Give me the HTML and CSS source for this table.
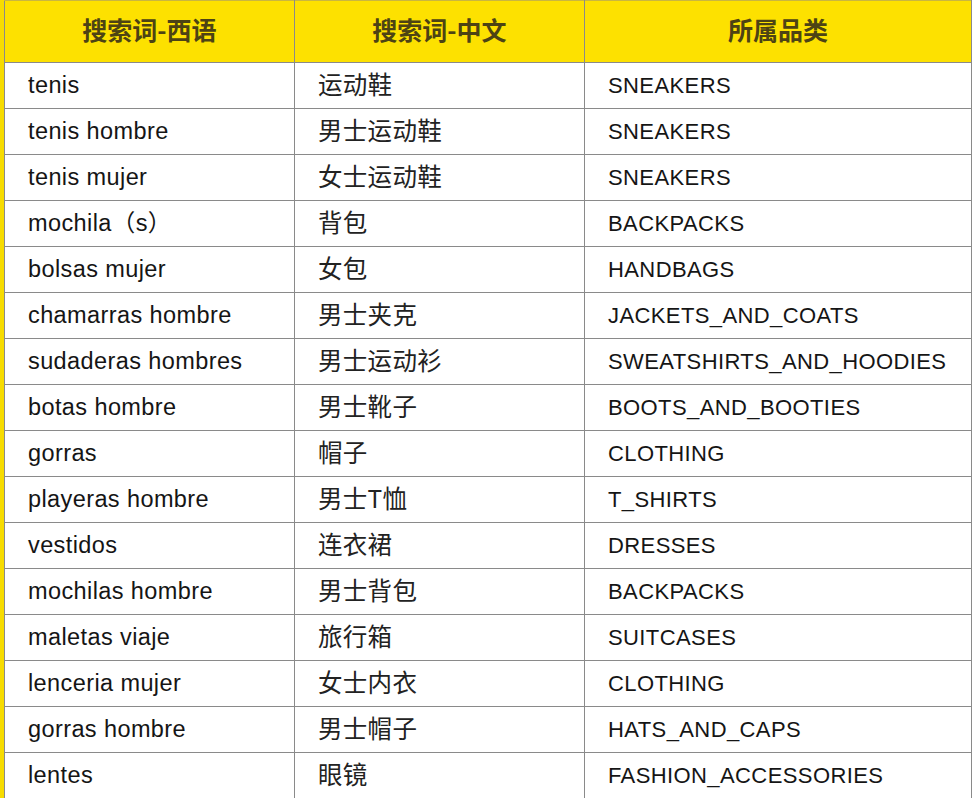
FILE: index.html
```html
<!DOCTYPE html>
<html lang="zh">
<head>
<meta charset="utf-8">
<link rel="stylesheet" href="styles.css">
</head>
<body>
<div class="page">
<table class="kw">
<thead>
<tr><th class="c1">搜索词-西语</th><th class="c2">搜索词-中文</th><th class="c3">所属品类</th></tr>
</thead>
<tbody>
<tr><td>tenis</td><td class="zh">运动鞋</td><td class="cat">SNEAKERS</td></tr>
<tr><td>tenis hombre</td><td class="zh">男士运动鞋</td><td class="cat">SNEAKERS</td></tr>
<tr><td>tenis mujer</td><td class="zh">女士运动鞋</td><td class="cat">SNEAKERS</td></tr>
<tr><td>mochila（s）</td><td class="zh">背包</td><td class="cat">BACKPACKS</td></tr>
<tr><td>bolsas mujer</td><td class="zh">女包</td><td class="cat">HANDBAGS</td></tr>
<tr><td>chamarras hombre</td><td class="zh">男士夹克</td><td class="cat">JACKETS_AND_COATS</td></tr>
<tr><td>sudaderas hombres</td><td class="zh">男士运动衫</td><td class="cat">SWEATSHIRTS_AND_HOODIES</td></tr>
<tr><td>botas hombre</td><td class="zh">男士靴子</td><td class="cat">BOOTS_AND_BOOTIES</td></tr>
<tr><td>gorras</td><td class="zh">帽子</td><td class="cat">CLOTHING</td></tr>
<tr><td>playeras hombre</td><td class="zh">男士T恤</td><td class="cat">T_SHIRTS</td></tr>
<tr><td>vestidos</td><td class="zh">连衣裙</td><td class="cat">DRESSES</td></tr>
<tr><td>mochilas hombre</td><td class="zh">男士背包</td><td class="cat">BACKPACKS</td></tr>
<tr><td>maletas viaje</td><td class="zh">旅行箱</td><td class="cat">SUITCASES</td></tr>
<tr><td>lenceria mujer</td><td class="zh">女士内衣</td><td class="cat">CLOTHING</td></tr>
<tr><td>gorras hombre</td><td class="zh">男士帽子</td><td class="cat">HATS_AND_CAPS</td></tr>
<tr><td>lentes</td><td class="zh">眼镜</td><td class="cat">FASHION_ACCESSORIES</td></tr>
</tbody>
</table>
</div>
</body>
</html>
```
FILE: styles.css
```css
html, body {
  margin: 0;
  padding: 0;
  background: #ffffff;
}
.page {
  width: 974px;
  height: 798px;
  overflow: hidden;
  background: linear-gradient(to right, #f7dc00 0, #f7dc00 4px, #ffffff 4px);
  padding-left: 4px;
  box-sizing: border-box;
}
.kw {
  border-collapse: collapse;
  width: 968px;
  table-layout: fixed;
  font-family: "Liberation Sans", Arial, "Noto Sans CJK SC", sans-serif;
  color: #151515;
}
.kw th {
  height: 62px;
  box-sizing: border-box;
  background: #fde100;
  color: #4d4314;
  font-family: "Noto Sans CJK SC", sans-serif;
  font-weight: 700;
  font-size: 25px;
  line-height: 1;
  text-align: center;
  border: 1px solid #8a8a8a;
  border-top: 1px solid #c9b640;
  padding: 0 0 4px 0;
}
.kw .c1 { width: 290px; }
.kw .c2 { width: 290px; }
.kw td {
  height: 46px;
  border: 1px solid #8a8a8a;
  padding: 0 0 0 23px;
  font-size: 23.5px;
  letter-spacing: 0.4px;
  line-height: 1;
  white-space: nowrap;
  box-sizing: border-box;
}
.kw td.zh {
  font-family: "Noto Sans CJK SC", sans-serif;
  font-size: 24.5px;
  letter-spacing: 0.3px;
  color: #222;
  padding-bottom: 3px;
}
.kw td.cat {
  font-size: 22px;
  letter-spacing: 0.4px;
}
```
